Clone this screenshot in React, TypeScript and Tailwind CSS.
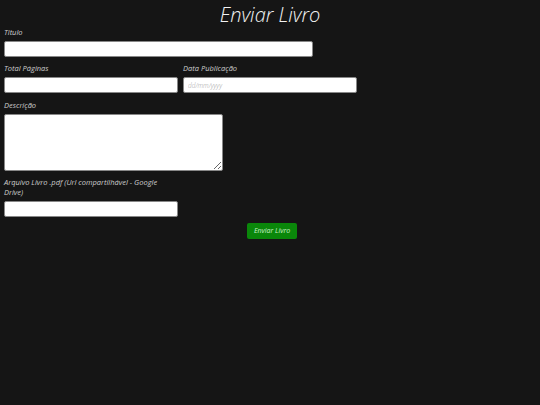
export default function App() {
  const font = { fontFamily: '"Open Sans", "Liberation Sans", sans-serif' };
  const label = 'text-[7.5px] leading-[10px] font-normal text-[#cdcdcd]';
  const field = 'mt-[4px] h-[16px] rounded-[2px] border border-[#888] bg-white';
  return (
    <div className="min-h-[405px] w-full bg-[#151515] text-white italic" style={font}>
      <h1 className="pt-[2px] text-center text-[20px] leading-[25px] font-light text-[#f2f2f2]">Enviar Livro</h1>
      <form className="flex flex-col px-[4px]">
        <label className={label}>Titulo</label>
        <input type="text" className={`${field} w-[309px]`} />

        <div className="mt-[6px] flex gap-[5px]">
          <div className="flex flex-col">
            <label className={label}>Total Páginas</label>
            <input type="number" className={`${field} w-[174px]`} />
          </div>
          <div className="flex flex-col">
            <label className={label}>Data Publicação</label>
            <input
              type="text"
              placeholder="dd/mm/yyyy"
              className={`${field} w-[174px] px-[4px] text-[6.5px] font-light text-black placeholder:text-[#a0a0a0]`}
            />
          </div>
        </div>

        <label className={`mt-[7px] ${label}`}>Descrição</label>
        <textarea className="mt-[4px] h-[57px] w-[219px] rounded-[2px] border border-[#888] bg-white" />

        <label className={`mt-[6px] w-[160px] ${label}`}>
          Arquivo Livro .pdf (Url compartilhável - Google Drive)
        </label>
        <input type="text" className={`${field} w-[174px]`} />

        <div className="mt-[6px] flex justify-center pl-[4px]">
          <button
            type="button"
            className="h-[16px] w-[50px] rounded-[2px] bg-[#0a870a] text-[7px] font-normal text-[#c8f0c8] italic"
          >
            Enviar Livro
          </button>
        </div>
      </form>
    </div>
  );
}
